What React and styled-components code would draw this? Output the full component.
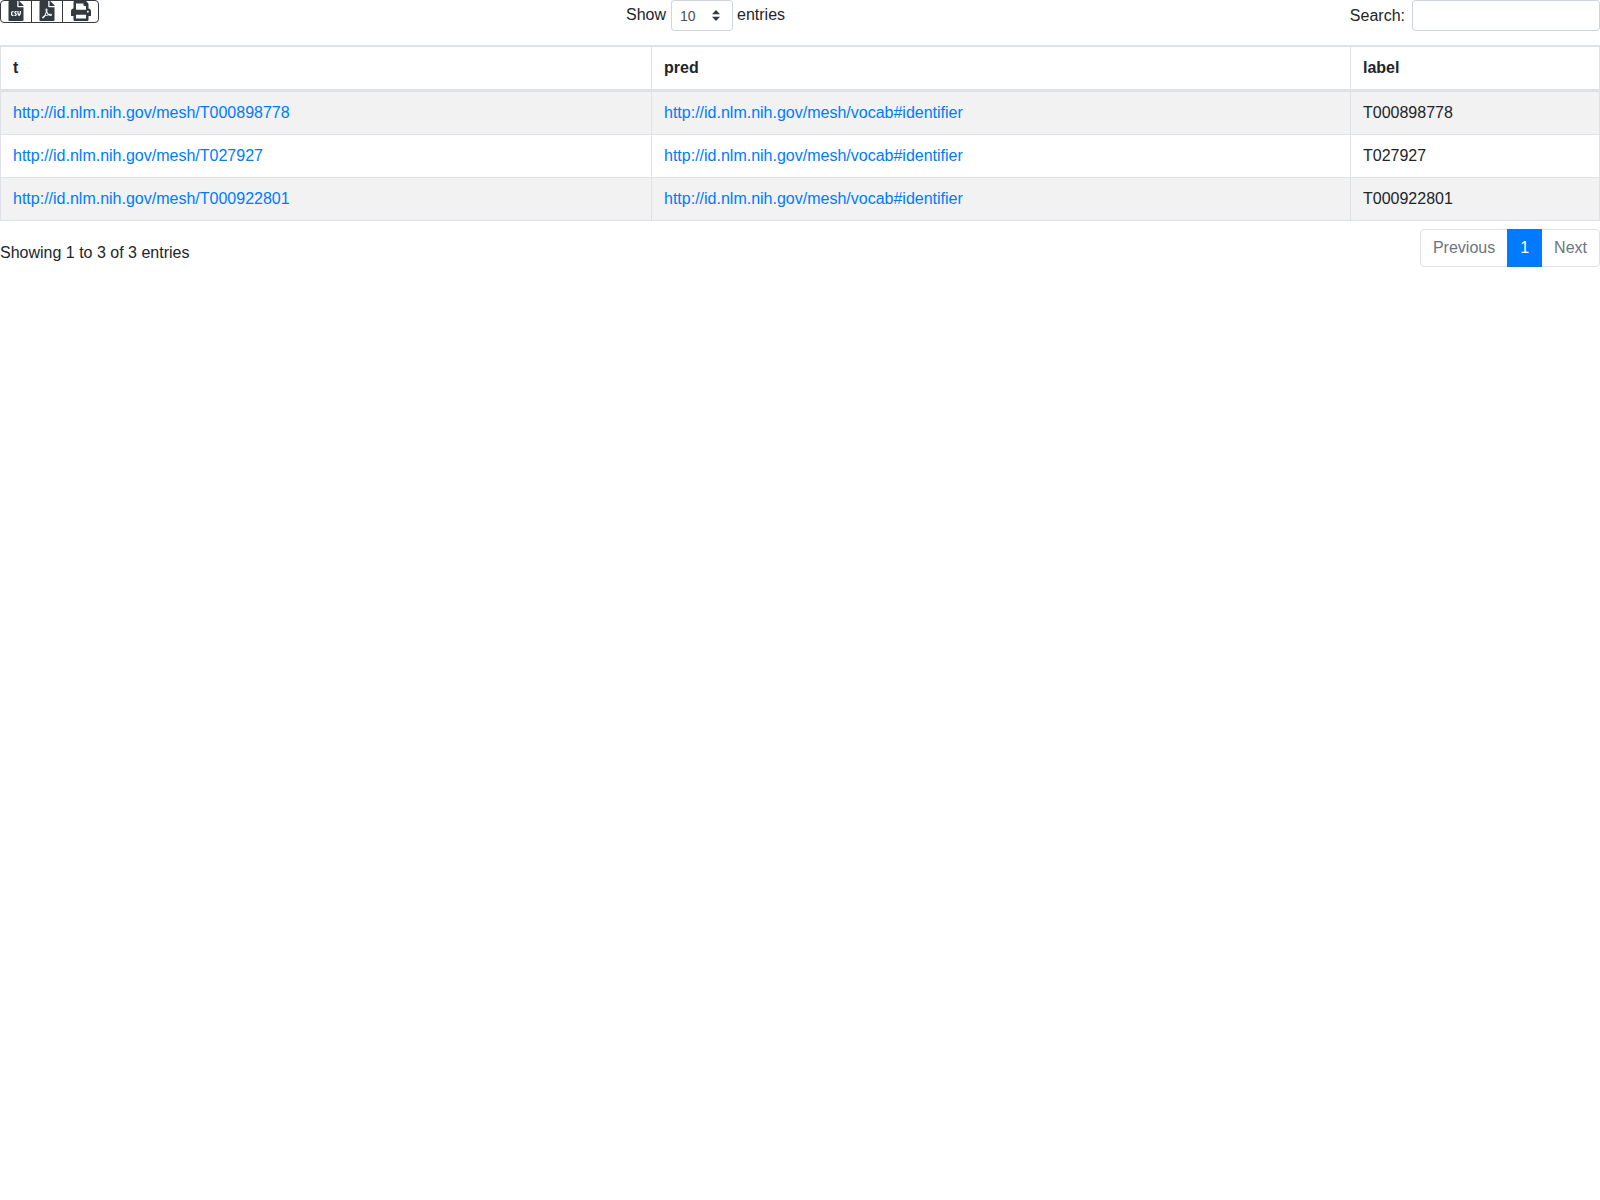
import React from 'react';
import styled, {createGlobalStyle} from 'styled-components';
import {FaFileCsv, FaFilePdf, FaPrint} from 'react-icons/fa';

const rows = [
    {t: 'http://id.nlm.nih.gov/mesh/T000898778', pred: 'http://id.nlm.nih.gov/mesh/vocab#identifier', label: 'T000898778'},
    {t: 'http://id.nlm.nih.gov/mesh/T027927', pred: 'http://id.nlm.nih.gov/mesh/vocab#identifier', label: 'T027927'},
    {t: 'http://id.nlm.nih.gov/mesh/T000922801', pred: 'http://id.nlm.nih.gov/mesh/vocab#identifier', label: 'T000922801'},
];

const App = () => {
    return (
        <Wrapper>
            <GlobalStyle/>
            <TopBar>
                <ButtonGroup>
                    <IconButton $width={30}><FaFileCsv/></IconButton>
                    <IconButton $width={30}><FaFilePdf/></IconButton>
                    <IconButton $width={35}><FaPrint/></IconButton>
                </ButtonGroup>
                <LengthLabel>
                    Show
                    <Select>
                        <span>10</span>
                        <svg width="8" height="11" viewBox="0 0 8 11">
                            <path d="M4 0 L8 4.2 H0 Z M0 6.8 H8 L4 11 Z" fill="#343a40"/>
                        </svg>
                    </Select>
                    entries
                </LengthLabel>
                <SearchLabel>
                    Search:
                    <SearchInput type="text"/>
                </SearchLabel>
            </TopBar>
            <Table>
                <colgroup>
                    <Col $width={651}/>
                    <Col $width={699}/>
                    <Col $width={249}/>
                </colgroup>
                <thead>
                <tr>
                    <Th>t</Th>
                    <Th>pred</Th>
                    <Th>label</Th>
                </tr>
                </thead>
                <tbody>
                {rows.map((row, i) => (
                    <Row key={row.label} $odd={i % 2 === 0}>
                        <Td><Link href="#">{row.t}</Link></Td>
                        <Td><Link href="#">{row.pred}</Link></Td>
                        <Td>{row.label}</Td>
                    </Row>
                ))}
                </tbody>
            </Table>
            <BottomBar>
                <Info>Showing 1 to 3 of 3 entries</Info>
                <Pagination>
                    <PageLink $first>Previous</PageLink>
                    <PageLink $active>1</PageLink>
                    <PageLink $last>Next</PageLink>
                </Pagination>
            </BottomBar>
        </Wrapper>
    )
}

const GlobalStyle = createGlobalStyle`
  html, body {
    margin: 0;
    padding: 0;
    background: #fff;
  }
  body {
    font-family: "Liberation Sans", Arial, sans-serif;
    font-size: 16px;
    line-height: 1.5;
    color: #212529;
  }
  * {
    box-sizing: border-box;
  }
`;

const Wrapper = styled.div`
  width: 1600px;
`;

const TopBar = styled.div`
  display: grid;
  grid-template-columns: 626px 1fr auto;
  align-items: start;
  height: 45px;
`;

const ButtonGroup = styled.div`
  display: flex;
  justify-self: start;
  height: 23px;
  border: 1px solid #343a40;
  border-radius: 4px;
  overflow: hidden;
`;

const IconButton = styled.button`
  display: flex;
  align-items: flex-start;
  justify-content: center;
  flex: none;
  width: ${props => props.$width + 1}px;
  height: 100%;
  padding: 0;
  background: none;
  border: 0;
  border-left: 1px solid #343a40;
  color: #343a40;
  font-size: 20px;

  &:first-child {
    width: ${props => props.$width}px;
    border-left: 0;
  }
`;

const LengthLabel = styled.label`
  display: flex;
  align-items: flex-start;
  gap: 5px;
  line-height: 30px;
`;

const Select = styled.div`
  display: flex;
  align-items: center;
  justify-content: space-between;
  width: 62px;
  height: 31px;
  margin-right: -1px;
  padding: 0 12px 0 8px;
  border: 1px solid #ced4da;
  border-radius: 3.2px;
  font-size: 14px;
  color: #495057;
`;

const SearchLabel = styled.label`
  display: flex;
  align-items: flex-start;
  justify-content: flex-end;
  gap: 7px;
  line-height: 31px;
`;

const SearchInput = styled.input`
  width: 188px;
  height: 31px;
  padding: 4px 8px;
  border: 1px solid #ced4da;
  border-radius: 3.2px;
  background: #fff;
`;

const Table = styled.table`
  width: 1600px;
  table-layout: fixed;
  border-collapse: separate;
  border-spacing: 0;
  border: 1px solid #dee2e6;
  border-right: 0;
  font-size: 16px;
  color: #212529;
`;

const Col = styled.col`
  width: ${props => props.$width}px;
`;

const Th = styled.th`
  padding: 9px 12px;
  text-align: left;
  font-weight: 700;
  border-top: 1px solid #dee2e6;
  border-right: 1px solid #dee2e6;
  border-bottom: 2px solid #dee2e6;
`;

const Row = styled.tr`
  background: ${props => props.$odd ? '#f2f2f2' : '#fff'};
`;

const Td = styled.td`
  padding: 9px 12px;
  border-top: 1px solid #dee2e6;
  border-right: 1px solid #dee2e6;
`;

const Link = styled.a`
  color: #007bff;
  text-decoration: none;
`;

const BottomBar = styled.div`
  display: flex;
  justify-content: space-between;
  align-items: flex-start;
  padding-top: 8px;
`;

const Info = styled.div`
  padding-top: 12px;
`;

const Pagination = styled.div`
  display: flex;
  height: 38px;
`;

const PageLink = styled.a`
  position: relative;
  z-index: ${props => props.$active ? 1 : 0};
  padding: 6px 12px;
  margin-left: ${props => props.$first ? '0' : '-1px'};
  line-height: 24px;
  border: 1px solid ${props => props.$active ? '#007bff' : '#dee2e6'};
  border-radius: ${props => props.$first ? '4px 0 0 4px' : props.$last ? '0 4px 4px 0' : '0'};
  background: ${props => props.$active ? '#007bff' : '#fff'};
  color: ${props => props.$active ? '#fff' : '#6c757d'};
`;

export default App;
